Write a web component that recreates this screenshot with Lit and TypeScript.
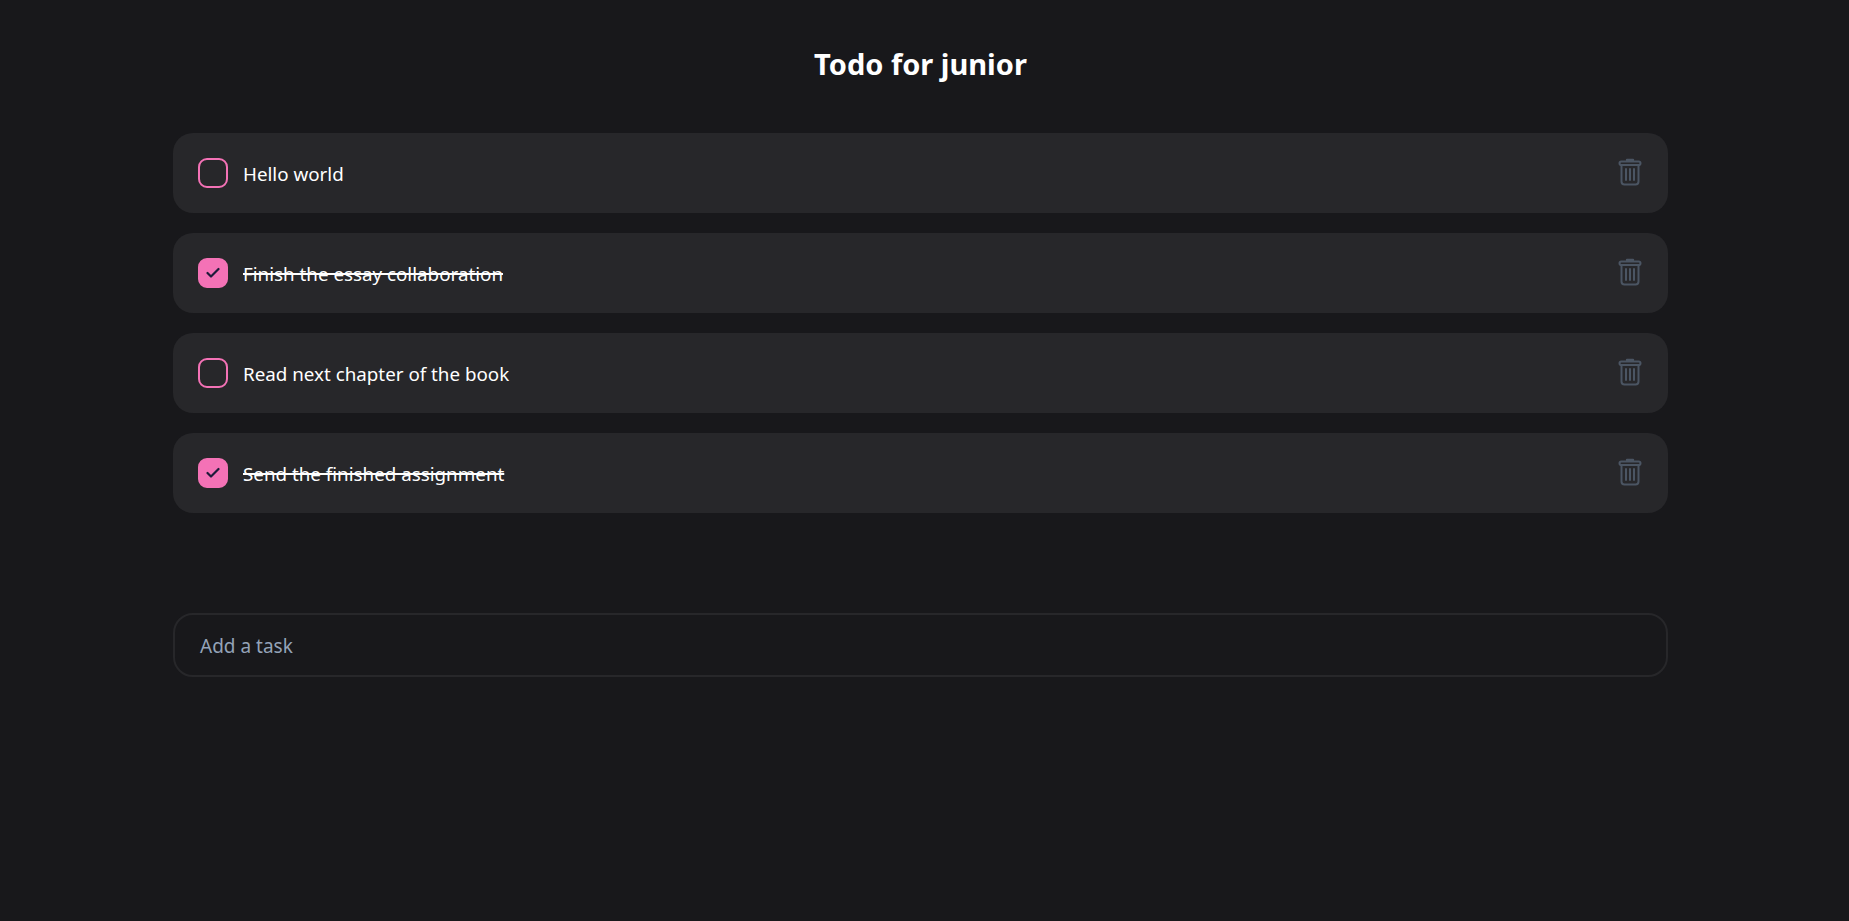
import { LitElement, html, css } from "lit";
import { customElement } from "lit/decorators.js";

const tasks = [
  { text: "Hello world", done: false },
  { text: "Finish the essay collaboration", done: true },
  { text: "Read next chapter of the book", done: false },
  { text: "Send the finished assignment", done: true },
];

@customElement("app-root")
export class AppRoot extends LitElement {
  static styles = css`
    :host {
      display: block;
      min-height: 921px;
      background: #18181b;
      color: #fff;
      font-family: "Noto Sans", "Open Sans", sans-serif;
    }
    .page {
      width: 1495px;
      margin-left: 173px;
      padding-top: 45px;
    }
    h1 {
      margin: 0 0 43px;
      height: 45px;
      line-height: 38px;
      text-align: center;
      font-size: 29px;
      font-weight: 700;
    }
    .list {
      display: flex;
      flex-direction: column;
      gap: 20px;
    }
    .row {
      height: 80px;
      box-sizing: border-box;
      display: flex;
      align-items: center;
      padding: 0 26px 0 25px;
      background: #27272a;
      border-radius: 20px;
    }
    .box {
      width: 30px;
      height: 30px;
      box-sizing: border-box;
      border: 2px solid #f472b6;
      border-radius: 9px;
      margin-right: 15px;
      display: flex;
      align-items: center;
      justify-content: center;
      flex: none;
    }
    .box.done {
      background: #f472b6;
    }
    .text {
      flex: 1;
      font-size: 18.8px;
      line-height: 28px;
      padding-top: 2px;
    }
    .text.done {
      text-decoration: line-through;
      text-decoration-thickness: 2px;
    }
    .trash {
      display: block;
      flex: none;
      margin-top: -2px;
    }
    .input {
      margin-top: 100px;
      height: 64px;
      box-sizing: border-box;
      border: 2px solid #27272a;
      border-radius: 20px;
      padding: 1px 25px 0;
      display: flex;
      align-items: center;
      font-size: 19px;
      color: #94a3b8;
    }
  `;

  render() {
    return html`
      <div class="page">
        <h1>Todo for junior</h1>
        <div class="list">
          ${tasks.map(
            (t) => html`
              <div class="row">
                <div class="box ${t.done ? "done" : ""}">
                  ${t.done
                    ? html`<svg width="14" height="12" viewBox="0 0 14 12" fill="none">
                        <path d="M1.5 6 L5 9.5 L12.5 2" stroke="#1e1b3a" stroke-width="2.2" stroke-linecap="round" stroke-linejoin="round"></path>
                      </svg>`
                    : ""}
                </div>
                <div class="text ${t.done ? "done" : ""}">${t.text}</div>
                <svg class="trash" width="24" height="28" viewBox="0 0 24 28" fill="none" stroke="#4b5563" stroke-width="2" stroke-linecap="round" stroke-linejoin="round">
                  <path d="M9 2 H15" stroke-width="2.4"></path>
                  <rect x="1.5" y="3.5" width="21" height="3.6" rx="1.8"></rect>
                  <path d="M3.5 7.5 V23.5 C3.5 25.5 4.5 26.5 6.5 26.5 H17.5 C19.5 26.5 20.5 25.5 20.5 23.5 V7.5"></path>
                  <path d="M8 11 V22 M12 11 V22 M16 11 V22"></path>
                </svg>
              </div>
            `
          )}
        </div>
        <div class="input">Add a task</div>
      </div>
    `;
  }
}
